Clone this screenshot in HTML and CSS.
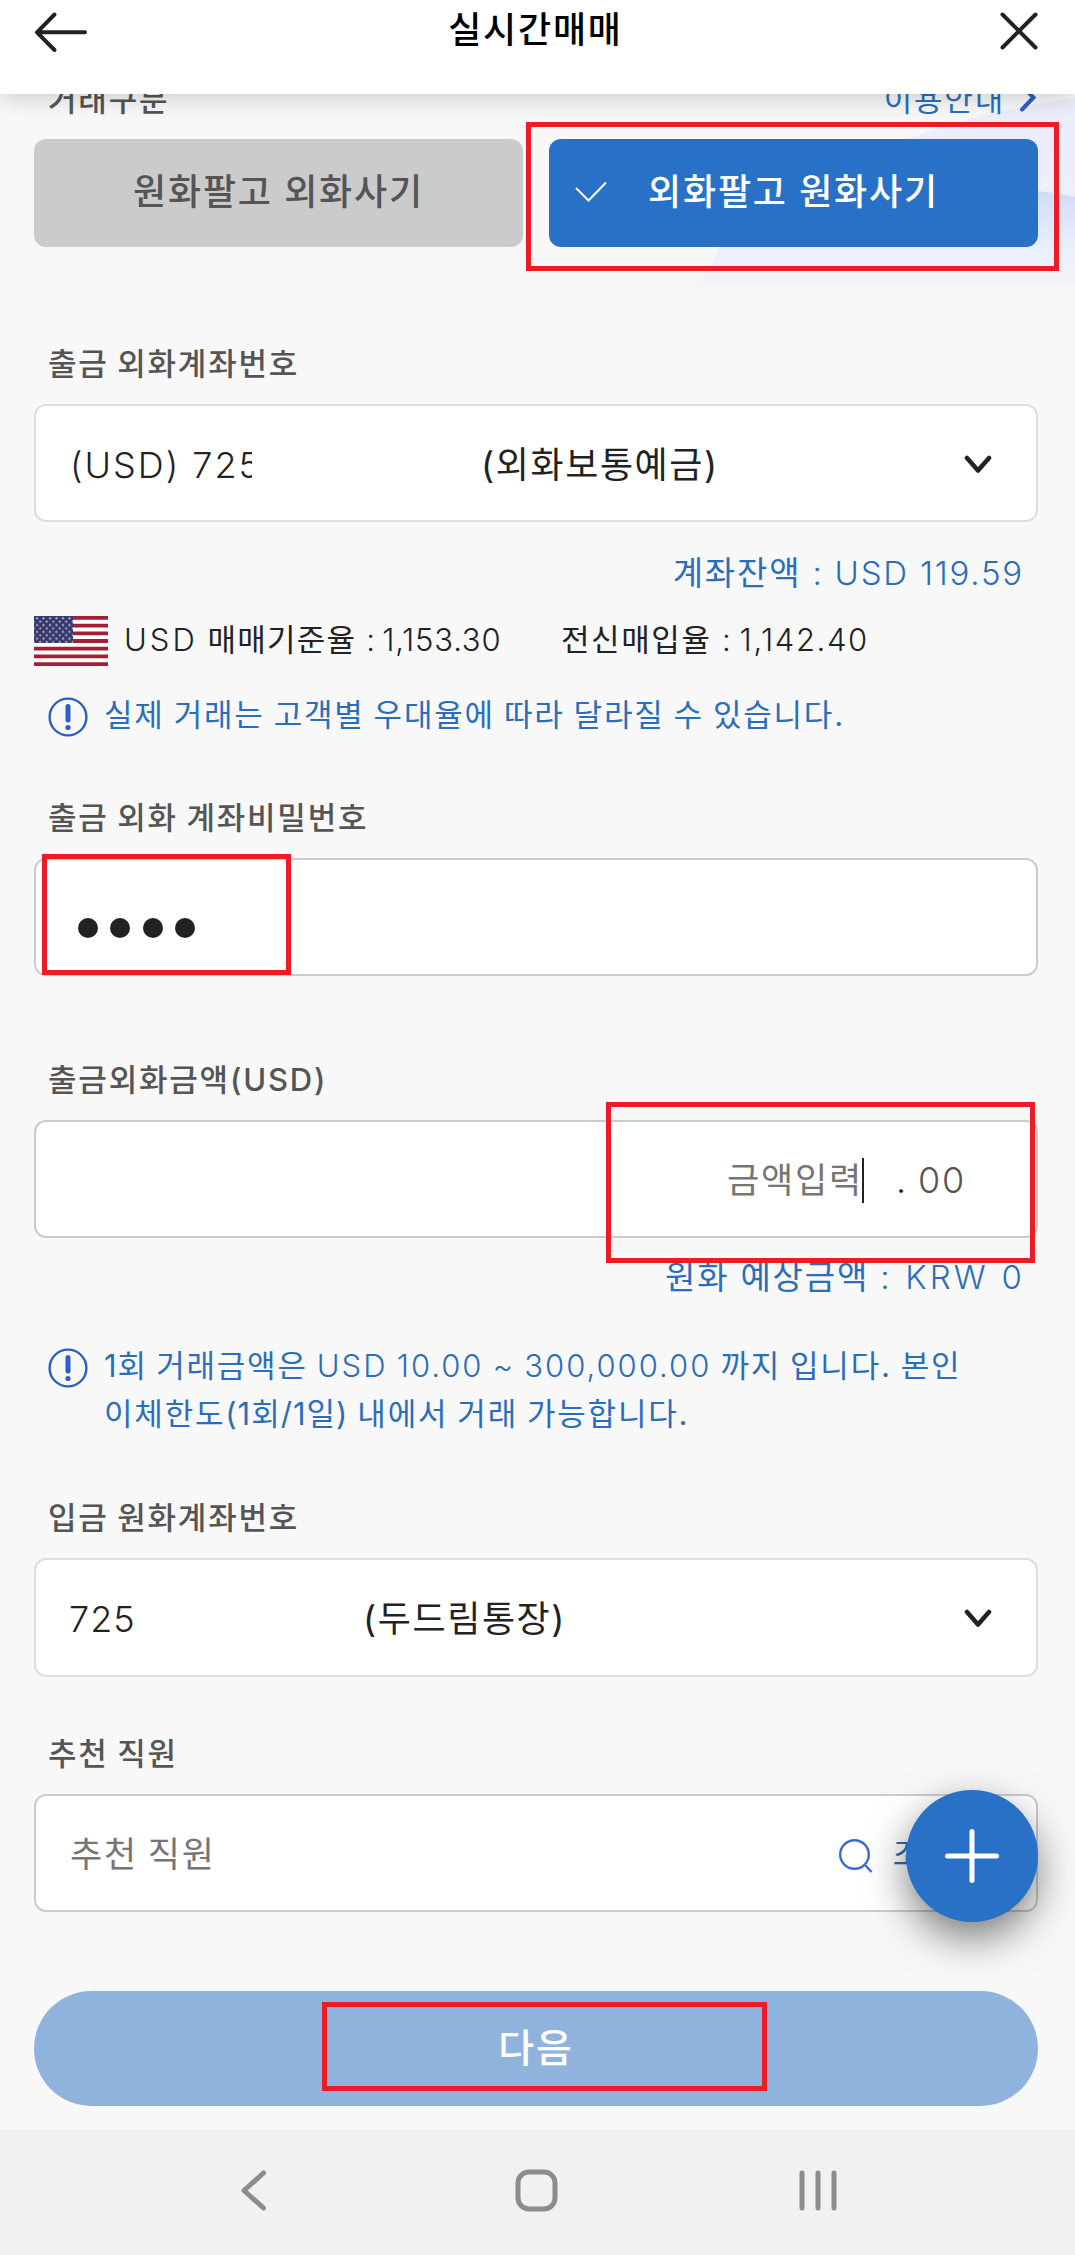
FILE: index.html
```html
<!DOCTYPE html>
<html lang="ko">
<head>
<meta charset="utf-8">
<title>실시간매매</title>
<link rel="stylesheet" href="styles.css">
</head>
<body>
<div class="screen">
  <header class="appbar">
    <svg class="appbar-back" width="56" height="44" viewBox="0 0 56 44"><path d="M22.500 4.500 5 22.300 22.500 40M5 22.300H53" /></svg>
    <h1 class="appbar-title">실시간매매</h1>
    <svg class="appbar-close" width="40" height="40" viewBox="0 0 40 40"><path d="M3.500 3.500 36.500 36.500M36.500 3.500 3.500 36.500" /></svg>
  </header>

  <svg class="waves" width="395" height="320" viewBox="0 0 395 320">
    <defs>
      <linearGradient id="lavender" x1="0" y1="0" x2="0" y2="1"><stop offset="0" stop-color="#ecedfb"/><stop offset=".5" stop-color="#eeeffb"/><stop offset="1" stop-color="#f8f8f8"/></linearGradient>
      <linearGradient id="sky" x1="0" y1="0" x2="0" y2="1"><stop offset="0" stop-color="#d0dbf8"/><stop offset=".5" stop-color="#e9eefb"/><stop offset="1" stop-color="#f8f8f8"/></linearGradient>
      <linearGradient id="mist" x1="0" y1="0" x2="0" y2="1"><stop offset="0" stop-color="#f1f4f9"/><stop offset="1" stop-color="#f8f8f8"/></linearGradient>
    </defs>
    <path fill="url(#lavender)" d="M190 155C260 122 330 108 395 98V290H150Z"/>
    <path fill="url(#mist)" d="M0 290C50 262 90 250 140 240H395V310H0Z"/>
    <path fill="url(#sky)" d="M40 247C150 205 300 175 395 197V300H10Z"/>
  </svg>

  <main class="form">
    <div class="section-head">
      <span class="label">거래구분</span>
      <a class="guide">이용안내 <svg width="18" height="30" viewBox="0 0 18 30"><path d="M3 3 14.500 14.500 3 26.500"/></svg></a>
    </div>
    <div class="tabs">
      <button class="tab">원화팔고 외화사기</button>
      <button class="tab tab-on"><svg class="tick" width="32" height="22" viewBox="0 0 32 22"><path d="M1 7 13.500 19.500 31 1.500"/></svg>외화팔고 원화사기</button>
    </div>

    <label class="label label-account">출금 외화계좌번호</label>
    <div class="field field-select">
      <span class="account-no account-no-cut">(USD) 725</span>
      <span class="account-name">(외화보통예금)</span>
      <svg class="chevron" width="28" height="20" viewBox="0 0 28 20"><path d="M3 3 14 15.500 25 3"/></svg>
    </div>
    <p class="amount balance">계좌잔액 <span class="num">: USD 119.59</span></p>
    <div class="rate">
      <svg class="flag" width="74" height="50" viewBox="0 0 74 50">
        <defs><pattern id="stars" width="6.500" height="6.800" patternUnits="userSpaceOnUse"><circle cx="3" cy="2.200" r="1.100" fill="#c6c6dc"/><circle cx="6.200" cy="5.600" r="1" fill="#c6c6dc"/><circle cx="-.3" cy="5.600" r="1" fill="#c6c6dc"/></pattern></defs>
        <path fill="#fff" d="M0 0h74v50H0z"/>
        <path stroke="#a51e34" stroke-width="3.850" d="M0 1.920h74M0 9.620h74M0 17.310h74M0 25h74M0 32.690h74M0 40.380h74M0 48.080h74"/>
        <path fill="#38386d" d="M0 0h39v26.900H0z"/><path fill="url(#stars)" d="M0 0h39v26.900H0z"/>
      </svg>
      <span class="rate-item rate-base"><span class="usd">USD</span> 매매기준율 <span class="num">: 1,153.30</span></span>
      <span class="rate-item rate-buy">전신매입율 <span class="num">: 1,142.40</span></span>
    </div>
    <div class="notice">
      <svg class="notice-icon" width="40" height="40" viewBox="0 0 40 40"><circle cx="20" cy="20" r="18.400"/><path d="M20 9.500V23"/><circle class="dot" cx="20" cy="30.500" r="2.600"/></svg>
      <p class="notice-text">실제 거래는 고객별 우대율에 따라 달라질 수 있습니다.</p>
    </div>

    <label class="label label-password">출금 외화 계좌비밀번호</label>
    <div class="field field-password">
      <i class="pin"></i><i class="pin"></i><i class="pin"></i><i class="pin"></i>
      <div class="mark mark-password"></div>
    </div>

    <label class="label label-amount">출금외화금액<span class="usd-unit">(USD)</span></label>
    <div class="field field-amount">
      <span class="placeholder">금액입력</span><i class="caret"></i>
      <span class="point">.</span><span class="cents">00</span>
      <div class="mark mark-amount"></div>
    </div>
    <p class="amount expected">원화 예상금액 <span class="num">: KRW 0</span></p>
    <div class="notice notice-limit">
      <svg class="notice-icon" width="40" height="40" viewBox="0 0 40 40"><circle cx="20" cy="20" r="18.400"/><path d="M20 9.500V23"/><circle class="dot" cx="20" cy="30.500" r="2.600"/></svg>
      <p class="notice-text"><span class="count">1회</span> 거래금액은 <span class="range">USD 10.00 ~ 300,000.00</span> 까지 입니다. 본인<br>이체한도<span class="count">(1회/1일)</span> 내에서 거래 가능합니다.</p>
    </div>

    <label class="label label-deposit">입금 원화계좌번호</label>
    <div class="field field-select field-deposit">
      <span class="account-no">725</span>
      <span class="account-name">(두드림통장)</span>
      <svg class="chevron" width="28" height="20" viewBox="0 0 28 20"><path d="M3 3 14 15.500 25 3"/></svg>
    </div>

    <label class="label label-staff">추천 직원</label>
    <div class="field field-staff">
      <span class="placeholder">추천 직원</span>
      <span class="lookup"><svg width="34" height="34" viewBox="0 0 34 34"><circle cx="15.500" cy="15.500" r="14.300"/><path d="M26 26 32.500 33"/></svg>조회</span>
      <button class="fab"><svg width="54" height="54" viewBox="0 0 54 54"><path d="M27 2.500V51.500M2.500 27H51.500"/></svg></button>
    </div>

    <button class="next">다음<span class="mark mark-next"></span></button>
  </main>
  <div class="mark mark-tab"></div>

  <nav class="navbar">
    <svg width="43" height="43" viewBox="0 0 43 43"><path d="M30.500 4 11 21.500 30.500 39"/></svg>
    <svg width="43" height="43" viewBox="0 0 43 43"><rect x="3" y="3" width="37" height="37" rx="11"/></svg>
    <svg width="43" height="43" viewBox="0 0 43 43"><path d="M5 4V39M21 4V39M37 4V39"/></svg>
  </nav>
</div>
</body>
</html>
```
FILE: styles.css
```css
* { box-sizing: border-box; }
body { margin: 0; }
h1, p { margin: 0; font-weight: inherit; }
svg { display: block; fill: none; flex: none; }
button { border: 0; padding: 0; font: inherit; letter-spacing: inherit; color: inherit; }

.screen {
  position: relative;
  display: flex;
  flex-direction: column;
  width: 1075px;
  height: 2255px;
  overflow: hidden;
  background: #f8f8f8;
  color: #222;
  font: 400 36px/44px Inter, "Noto Sans CJK KR", sans-serif;
  letter-spacing: 1.8px;
  white-space: nowrap;
}

/* App bar, floating above the scrolled form */
.appbar {
  position: absolute;
  z-index: 3;
  top: 0;
  left: 0;
  right: 0;
  height: 94px;
  display: flex;
  align-items: flex-start;
  justify-content: space-between;
  padding: 10px 36px 0 32px;
  background: #fff;
  box-shadow: 0 4px 22px rgba(0, 0, 0, .18);
}
.appbar svg { stroke: #222; stroke-width: 4; stroke-linecap: round; stroke-linejoin: round; }
.appbar-close { margin-top: 1px; }
.appbar-title { font-size: 36px; line-height: 40px; font-weight: 500; color: #000; margin-left: -16px; }

.waves { position: absolute; top: 0; right: 0; }

.form {
  position: relative;
  height: 2129px;
  display: flex;
  flex-direction: column;
  padding: 78px 37px 0 34px;
}
.section-head { display: flex; justify-content: space-between; height: 44px; }
.label { padding-left: 14px; height: 44px; font-size: 31px; font-weight: 500; letter-spacing: 1.8px; word-spacing: -1.500px; color: #555; }
.guide { display: flex; align-items: center; gap: 14px; font-size: 31px; color: #2a6ebb; padding-right: 1px; }
.guide svg { stroke: #2a5fc9; stroke-width: 4; stroke-linecap: round; margin-top: -4px; }

.tabs { display: grid; grid-template-columns: 489px 489px; gap: 26px; margin-top: 17px; }
.tab { position: relative; height: 108px; padding-bottom: 2px; border-radius: 12px; background: #cbcbcb; color: #555; font-weight: 500; }
.tab-on { background: #2871c7; color: #fff; }
.tick { position: absolute; left: 26px; top: 42px; stroke: #fff; stroke-width: 2; }

.label-account { margin-top: 95px; }
.label-password { margin-top: 56px; }
.label-amount { margin-top: 82px; }
.label-deposit { margin-top: 57px; }
.label-staff { margin-top: 55px; }

.field {
  position: relative;
  display: flex;
  align-items: center;
  height: 118px;
  margin-top: 18px;
  padding: 3px 0 0 34px;
  border: 2px solid #cbcbcb;
  border-radius: 12px;
  background: #fff;
}
.field-select { border-color: #dedede; }
.field-deposit { height: 119px; padding-left: 33px; }
.account-no { width: 411px; font-weight: 300; letter-spacing: 1px; }
.account-no-cut { letter-spacing: 2px; }
.account-no-cut::after { content: ""; position: absolute; left: 216px; width: 40px; height: 44px; background: #fff; }
.field-deposit .account-no { width: 294px; }
.account-name { flex: 1; letter-spacing: 1.600px; }
.chevron { margin-right: 44px; stroke: #222; stroke-width: 4.500; stroke-linecap: round; stroke-linejoin: round; }

.amount { padding-right: 14px; text-align: right; font-size: 33px; color: #2a6ebb; }
.balance { margin-top: 29px; }
.expected { margin-top: 17px; }
.expected .num { letter-spacing: 3.200px; margin-right: -1px; }
.num, .usd, .range { font-weight: 300; }

.rate { display: flex; align-items: center; height: 50px; margin-top: 21px; padding-bottom: 3px; font-size: 31px; }
.flag { position: relative; top: 1.500px; }
.rate-item { letter-spacing: 1.6px; }
.rate-item .num { word-spacing: -3px; }
.rate-base { width: 437px; margin-left: 16px; letter-spacing: 1.200px; }
.rate-base .usd { letter-spacing: 3px; }
.rate-base .num { letter-spacing: .8px; }

.notice { display: flex; gap: 16px; margin-top: 25px; padding-left: 14px; color: #2a6ebb; font-size: 31px; line-height: 48.500px; word-spacing: -1.500px; }
.notice-icon { margin-top: 6px; stroke: #2a5fc9; stroke-width: 2.400; }
.notice-icon path { stroke-width: 5; stroke-linecap: round; }
.notice-icon .dot { fill: #2a5fc9; stroke: none; }
.notice-limit { margin-top: 43px; }
.range { letter-spacing: 2px; }
.count { letter-spacing: 1px; }

.field-password { gap: 12.300px; padding: 22px 0 0 42px; }
.pin { width: 20px; height: 20px; border-radius: 50%; background: #222; }

.placeholder { color: #757575; font-size: 35px; word-spacing: -2px; }
.field-amount { justify-content: flex-end; padding-right: 70px; }
.caret { width: 2px; height: 45px; margin-left: -1px; background: #222; }
.point { margin-left: 32px; font-weight: 300; }
.cents { margin-left: 10px; color: #555; font-weight: 300; }

.lookup { display: flex; align-items: center; gap: 20px; margin-left: 623px; color: #2a6ebb; font-size: 31px; }
.lookup svg { stroke: #3a6ccf; stroke-width: 2.400; margin-top: 3px; }
.fab {
  position: absolute;
  top: -6px;
  right: -2px;
  display: grid;
  place-items: center;
  width: 132px;
  height: 132px;
  border-radius: 50%;
  background: #2871c7;
  box-shadow: 0 16px 40px rgba(0, 0, 0, .5);
}
.fab svg { stroke: #fff; stroke-width: 5; stroke-linecap: round; }

.next {
  position: relative;
  height: 115px;
  margin-top: 79px;
  border-radius: 58px;
  background: #8fb3dd;
  color: #fff;
  font-size: 39px;
  font-weight: 500;
}

/* Red callout frames */
.mark { position: absolute; z-index: 2; border: 5px solid #ed1c24; }
.mark-tab { left: 526px; top: 122px; width: 533px; height: 149px; }
.mark-password { left: 6px; top: -6px; width: 249px; height: 121px; }
.mark-amount { left: 570px; top: -20px; width: 429px; height: 161px; }
.mark-next { left: 288px; top: 11px; width: 445px; height: 89px; }

.navbar {
  display: flex;
  align-items: center;
  justify-content: center;
  gap: 239px;
  height: 126px;
  padding: 0 3px 4px 0;
  background: #f1f1f1;
}
.navbar svg { stroke: #8c8c8c; stroke-width: 5; stroke-linecap: round; stroke-linejoin: round; }
```
